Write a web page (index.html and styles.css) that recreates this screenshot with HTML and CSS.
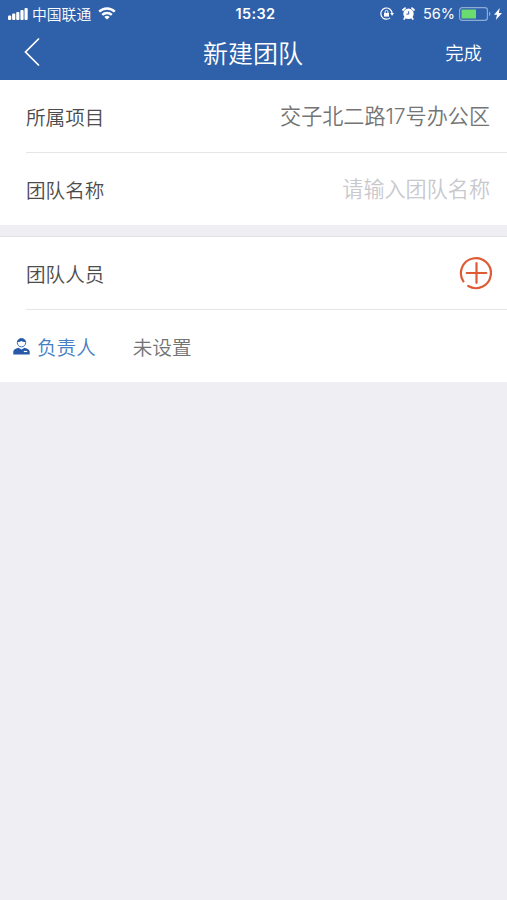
FILE: index.html
```html
<!DOCTYPE html>
<html lang="zh-CN">
<head>
    <meta charset="utf-8">
    <meta name="viewport" content="width=device-width, initial-scale=1">
    <link rel="stylesheet" href="styles.css">
    <title>新建团队</title>
</head>
<body>
<header class="header">
    <div class="status">
        <div class="status-left">
            <svg class="signal" width="20" height="12" viewBox="0 0 20 12" fill="#fff">
                <rect x="0" y="7.5" width="3.2" height="4.5" rx="1"/>
                <rect x="4.1" y="5.5" width="3.2" height="6.5" rx="1"/>
                <rect x="8.2" y="4" width="3.2" height="8" rx="1"/>
                <rect x="12.4" y="2" width="3.2" height="10" rx="1"/>
                <rect x="16.5" y="0" width="3.2" height="12" rx="1"/>
            </svg>
            <span class="carrier">中国联通</span>
            <svg class="wifi" width="18" height="13" viewBox="0 0 18 13" fill="none" stroke="#fff" stroke-width="2.4">
                <path d="M1.2 4.6a11.2 11.2 0 0 1 15.6 0"/>
                <path d="M4.2 7.9a7 7 0 0 1 9.6 0"/>
                <path d="M9 12.6L6.3 10a4 4 0 0 1 5.4 0z" fill="#fff" stroke="none"/>
            </svg>
        </div>
        <span class="time">15:32</span>
        <div class="status-right">
            <svg class="lock" width="14" height="13" viewBox="0 0 14 13" fill="none" stroke="#fff" stroke-width="1.2">
                <path d="M10.1 10.9a5.6 5.6 0 1 1 2-4.4"/>
                <path d="M10.2 6.1h3.8l-1.9 2.6z" fill="#fff" stroke="none"/>
                <rect x="4" y="6" width="5" height="3.6" fill="#fff" stroke="none"/>
                <path d="M5.1 6V4.8a1.4 1.4 0 0 1 2.8 0V6" stroke-width="1"/>
            </svg>
            <svg class="alarm" width="13" height="13" viewBox="0 0 13 13">
                <circle cx="6.5" cy="6.8" r="5.2" fill="#fff"/>
                <path d="M1 3L3 1.200M12 3L10 1.200M3 10.800l-.8 1.200M10 10.800l.8 1.200" stroke="#fff" stroke-width="1.800" stroke-linecap="round"/>
                <path d="M6.700 4.200v2.900H4.400" fill="none" stroke="#2f61aa" stroke-width="1"/>
            </svg>
            <span class="percent">56%</span>
            <svg class="battery" width="32" height="14" viewBox="0 0 32 14">
                <rect x=".6" y=".6" width="27.8" height="12.8" rx="2.6" fill="none" stroke="#8eabd4" stroke-width="1.2"/>
                <rect x="2.5" y="2.5" width="14.5" height="9" fill="#6bdc70"/>
                <path d="M30 4.8a2.4 2.4 0 0 1 0 4.4z" fill="#8eabd4"/>
            </svg>
            <svg class="bolt" width="8" height="12" viewBox="0 0 8 12" fill="#fff">
                <path d="M5.8 0L0 6.8h3L1.8 12 8 5H4.8z"/>
            </svg>
        </div>
    </div>
    <div class="nav">
        <svg class="back" width="16" height="28" viewBox="0 0 16 28" fill="none" stroke="#fff" stroke-width="1.7" stroke-linecap="round">
            <path d="M14.500 1L1.500 14l13 13"/>
        </svg>
        <h1 class="title">新建团队</h1>
        <span class="done">完成</span>
    </div>
</header>

<section class="group">
    <div class="row">
        <span class="label">所属项目</span>
        <span class="value">交子北二路17号办公区</span>
    </div>
    <div class="row">
        <span class="label">团队名称</span>
        <span class="value placeholder">请输入团队名称</span>
    </div>
</section>

<section class="group members">
    <div class="row">
        <span class="label">团队人员</span>
        <svg class="add" width="34" height="34" viewBox="0 0 34 34" fill="none" stroke="#df5a36" stroke-width="2.2" stroke-linecap="round">
            <path d="M4.400 25.400A15 15 0 1 1 9.200 30"/>
            <path d="M17.500 7.200v19.600M7.700 17h19.600"/>
        </svg>
    </div>
    <div class="leader">
        <svg class="person" width="17" height="18" viewBox="0 0 17 18">
            <path d="M.3 17.400v-2.600c0-2 2-3.300 5.200-4l3 1.600 3-1.600c3.200.7 5.200 2 5.200 4v2.600z" fill="#2859a8"/>
            <circle cx="8.500" cy="5.700" r="4.200" fill="#fff" stroke="#2859a8" stroke-width=".9"/>
            <path d="M4.100 5a4.500 4.500 0 0 1 8.800 0c-2 .2-3.400-.2-4.400-.9-1.200.8-2.600 1.100-4.400.9z" fill="#2859a8"/>
            <path d="M10.800 14.500h3.400" stroke="#fff" stroke-width="1.200"/>
        </svg>
        <span class="role">负责人</span>
        <span class="unset">未设置</span>
    </div>
</section>
</body>
</html>
```
FILE: styles.css
```css
*{
    box-sizing: border-box;
}

body{
    margin: 0;
    min-height: 900px;
    background: #eeeef3;
    font-family: "Noto Sans CJK SC", sans-serif;
    font-weight: 350;
}

svg{
    display: block;
    flex: none;
}

.header{
    height: 80px;
    background: #2f61aa;
    color: #fff;
}

.status{
    display: grid;
    grid-template-columns: 1fr auto 1fr;
    align-items: center;
    height: 27px;
    padding: 0 5px 0 8px;
}

.status-left,
.status-right{
    display: flex;
    align-items: center;
}

.status-right{
    justify-content: flex-end;
}

.carrier{
    margin-left: 4px;
    font-size: 14.8px;
    line-height: 26px;
}

.wifi{
    margin-left: 7px;
}

.time{
    padding-left: 1px;
    font-family: Inter, sans-serif;
    font-size: 14.5px;
    font-weight: 600;
    letter-spacing: 0.4px;
}

.alarm{
    margin-left: 8px;
}

.percent{
    margin: 0 4px 0 8px;
    font-family: Inter, sans-serif;
    font-size: 14.5px;
    font-weight: 400;
}

.bolt{
    margin-left: 3px;
}

.nav{
    display: grid;
    grid-template-columns: 1fr auto 1fr;
    align-items: center;
    height: 50px;
    padding: 0 25px 0 24px;
}

.title{
    margin: 0;
    font-size: 25px;
    font-weight: 350;
    line-height: 50px;
}

.done{
    justify-self: end;
    font-size: 18.4px;
}

.group{
    background: #fff;
}

.members{
    margin-top: 11px;
    border-top: 1px solid #e2e2e5;
}

.row{
    display: flex;
    align-items: center;
    justify-content: space-between;
    height: 73px;
    margin-left: 26px;
    padding-right: 17px;
    border-bottom: 1px solid #e6e6e8;
}

.row:last-child{
    height: 72px;
    border-bottom: 0;
}

.label{
    color: #4c4c4c;
    font-size: 19.6px;
}

.value{
    padding-bottom: 3px;
    color: #747474;
    font-family: Inter, "Noto Sans CJK SC", sans-serif;
    font-size: 21.1px;
}

.placeholder{
    color: #c8c8cd;
}

.members .row{
    height: 73px;
    padding-right: 14px;
}

.leader{
    display: flex;
    align-items: center;
    height: 72px;
    padding-left: 13px;
    font-size: 19.6px;
}

.role{
    margin-left: 7px;
    color: #4580c4;
}

.unset{
    margin-left: 37px;
    color: #747474;
}
```
